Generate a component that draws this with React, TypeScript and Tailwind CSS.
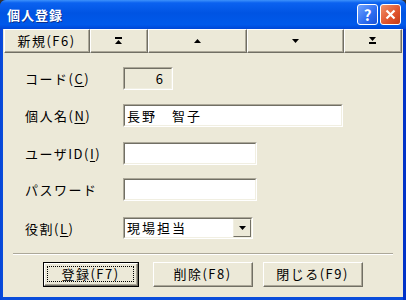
import React from "react";

const font = { fontFamily: '"Noto Sans CJK JP", "Noto Sans", sans-serif' };

function Sunken({ className, inner, children }: { className: string; inner: string; children?: React.ReactNode }) {
  return (
    <div className={`border border-t-[#aca899] border-l-[#aca899] border-b-white border-r-white ${className}`}>
      <div className={`h-full border border-t-[#716f64] border-l-[#716f64] border-b-[#f1efe2] border-r-[#f1efe2] ${inner}`}>
        {children}
      </div>
    </div>
  );
}

function ToolBtn({ w, children }: { w: string; children: React.ReactNode }) {
  return (
    <div className={`${w} h-full border border-t-white border-l-white border-b-[#716f64] border-r-[#716f64]`}>
      <div className="h-full flex items-center justify-center border-b border-r border-b-[#aca899] border-r-[#aca899] text-[13px] tracking-[1.5px] text-black">
        {children}
      </div>
    </div>
  );
}

function Label({ text, u }: { text: string; u?: string }) {
  return (
    <div className="w-[98px] text-[13px] tracking-[1.5px] text-black leading-none">
      {text}
      {u && (
        <>
          (<span className="underline underline-offset-2">{u}</span>)
        </>
      )}
    </div>
  );
}

function Btn({ w, label, def }: { w: string; label: string; def?: boolean }) {
  return (
    <div className={`${w} h-[25px] ${def ? "border border-black" : ""}`}>
      <div className="h-full border border-t-white border-l-white border-b-[#716f64] border-r-[#716f64]">
        <div className="h-full border-b border-r border-b-[#aca899] border-r-[#aca899] p-[2px]">
          <div className={`h-full flex items-center justify-center text-[13px] tracking-[1.5px] text-black ${def ? "border border-dotted border-black" : ""}`}>
            {label}
          </div>
        </div>
      </div>
    </div>
  );
}

export default function App() {
  return (
    <div className="w-[406px] h-[300px] bg-[#333]" style={font}>
      <div className="w-full h-full flex flex-col rounded-t-[6px] overflow-hidden bg-[linear-gradient(to_right,#0846d8_0,#0a4ddb_3px,#0a4ddb_403px,#0032c8_403px)]">
        {/* Title bar */}
        <div className="h-[29px] shrink-0 flex items-center pl-[7px] pr-[5px] bg-[linear-gradient(to_bottom,#3d92fb_0%,#0b62f0_10%,#0054e3_45%,#0059eb_85%,#0046d6_100%)]">
          <span className="text-white font-bold text-[13px] tracking-[1px] [text-shadow:1px_1px_0_#0a2f8f] flex-1">個人登録</span>
          <div className="w-[21px] h-[21px] rounded-[3px] border border-white flex items-center justify-center bg-[linear-gradient(135deg,#6fa3ff,#2d6cf0_60%,#1d52d6)] text-white font-bold text-[15px] leading-none">
            ?
          </div>
          <div className="w-[21px] h-[21px] ml-[2px] rounded-[3px] border border-white flex items-center justify-center bg-[linear-gradient(135deg,#f0926c,#e0522b_60%,#c23a17)]">
            <svg width="11" height="11" viewBox="0 0 11 11">
              <path d="M1.5 1.5 L9.5 9.5 M9.5 1.5 L1.5 9.5" stroke="white" strokeWidth="2.2" />
            </svg>
          </div>
        </div>

        {/* Client area */}
        <div className="flex-1 ml-[3px] mr-[3px] mb-[3px] bg-[#ece9d8] flex flex-col">
          {/* Toolbar */}
          <div className="h-[24px] flex pl-[1px]">
            <ToolBtn w="w-[86px]">新規(F6)</ToolBtn>
            <ToolBtn w="w-[58px]">
              <svg width="7" height="7" viewBox="0 0 7 7">
                <rect x="0" y="0" width="7" height="2" fill="black" />
                <path d="M3.5 3 L7 7 L0 7 Z" fill="black" />
              </svg>
            </ToolBtn>
            <ToolBtn w="w-[99px]">
              <svg width="7" height="4" viewBox="0 0 7 4">
                <path d="M3.5 0 L7 4 L0 4 Z" fill="black" />
              </svg>
            </ToolBtn>
            <ToolBtn w="w-[97px]">
              <svg width="7" height="4" viewBox="0 0 7 4">
                <path d="M0 0 L7 0 L3.5 4 Z" fill="black" />
              </svg>
            </ToolBtn>
            <ToolBtn w="w-[58px]">
              <svg width="7" height="7" viewBox="0 0 7 7">
                <path d="M0 0 L7 0 L3.5 4 Z" fill="black" />
                <rect x="0" y="5" width="7" height="2" fill="black" />
              </svg>
            </ToolBtn>
          </div>

          {/* Form */}
          <div className="flex items-center pl-[22px] mt-[14px]">
            <Label text="コード" u="C" />
            <Sunken className="w-[50px] h-[23px]" inner="bg-[#ece9d8] flex items-center justify-end pr-[8px] text-[13px] text-black">
              6
            </Sunken>
          </div>
          <div className="flex items-center pl-[22px] mt-[14px]">
            <Label text="個人名" u="N" />
            <Sunken className="w-[220px] h-[23px]" inner="bg-white flex items-center pl-[2px] text-[13px] tracking-[2px] text-black">
              長野　智子
            </Sunken>
          </div>
          <div className="flex items-center pl-[22px] mt-[15px]">
            <Label text="ユーザID" u="I" />
            <Sunken className="w-[134px] h-[23px]" inner="bg-white" />
          </div>
          <div className="flex items-center pl-[22px] mt-[13px]">
            <Label text="パスワード" />
            <Sunken className="w-[134px] h-[23px]" inner="bg-white" />
          </div>
          <div className="flex items-center pl-[22px] mt-[16px]">
            <Label text="役割" u="L" />
            <Sunken className="w-[130px] h-[22px]" inner="bg-white flex items-stretch">
              <div className="flex-1 flex items-center pl-[2px] text-[13px] tracking-[2px] text-black">現場担当</div>
              <div className="w-[18px] border border-t-[#f1efe2] border-l-[#f1efe2] border-b-[#716f64] border-r-[#716f64] bg-[#ece9d8] flex items-center justify-center">
                <svg width="7" height="4" viewBox="0 0 7 4">
                  <path d="M0 0 L7 0 L3.5 4 Z" fill="black" />
                </svg>
              </div>
            </Sunken>
          </div>

          {/* Separator */}
          <div className="mx-[10px] mt-[14px] border-t border-t-[#aca899] border-b border-b-white" />

          {/* Buttons */}
          <div className="flex pl-[40px] mt-[7px]">
            <Btn w="w-[96px]" label="登録(F7)" def />
            <div className="ml-[14px]">
              <Btn w="w-[100px]" label="削除(F8)" />
            </div>
            <div className="ml-[10px]">
              <Btn w="w-[100px]" label="閉じる(F9)" />
            </div>
          </div>
        </div>
      </div>
    </div>
  );
}
